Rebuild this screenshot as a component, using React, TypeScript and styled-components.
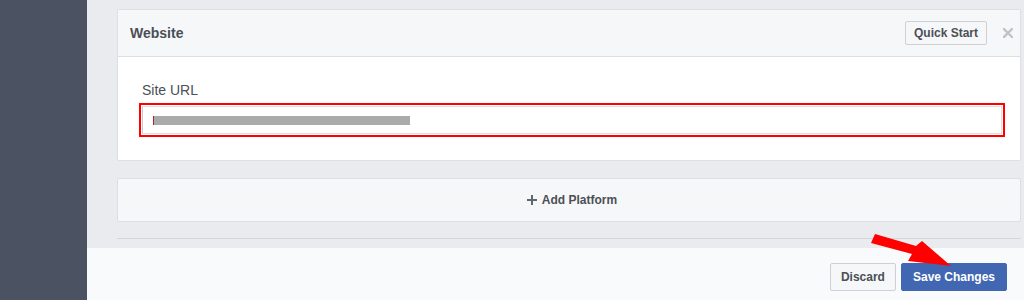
import styled, { createGlobalStyle } from "styled-components";

const GlobalStyle = createGlobalStyle`
  html, body {
    margin: 0;
    padding: 0;
    overflow: hidden;
  }

  body {
    font-family: "Liberation Sans", Arial, sans-serif;
  }
`;

const StyledPage = styled.div`
  position: relative;
  width: 1024px;
  height: 300px;
  display: flex;
  overflow: hidden;
`;

const Sidebar = styled.div`
  width: 87px;
  flex-shrink: 0;
  background-color: #4b5262;
`;

const Main = styled.div`
  flex: 1;
  display: flex;
  flex-direction: column;
  background-color: #e9ebee;
`;

const Content = styled.div`
  flex: 1;
  padding: 9px 3px 0 30px;
  overflow: hidden;
`;

const Card = styled.div`
  background-color: #fff;
  border: 1px solid #dddfe2;
  border-radius: 2px;
`;

const CardHeader = styled.div`
  height: 46px;
  display: flex;
  align-items: center;
  padding: 0 7px 0 12px;
  background-color: #f6f7f9;
  border-bottom: 1px solid #dddfe2;

  h3 {
    flex: 1;
    margin: 0;
    font-size: 14px;
    font-weight: 700;
    color: #4b4f56;
  }
`;

const Button = styled.button<{ $primary?: boolean; $height: number; $pad: number }>`
  height: ${(p) => p.$height}px;
  padding: 0 ${(p) => p.$pad}px;
  font-family: "Liberation Sans", Arial, sans-serif;
  font-size: 12px;
  font-weight: 700;
  border-radius: 2px;
  cursor: pointer;
  color: ${(p) => (p.$primary ? "#fff" : "#4b4f56")};
  background-color: ${(p) => (p.$primary ? "#4267b2" : "#f6f7f9")};
  border: 1px solid ${(p) => (p.$primary ? "#4267b2" : "#ced0d4")};
`;

const CloseIcon = styled.svg`
  width: 10px;
  height: 10px;
  margin-left: 16px;
`;

const CardBody = styled.div`
  padding: 24px 18px 26px 24px;

  label {
    display: block;
    font-size: 14px;
    line-height: 18px;
    color: #4b4f56;
    margin-bottom: 7px;
  }
`;

const UrlField = styled.div`
  height: 28px;
  box-sizing: border-box;
  display: flex;
  align-items: center;
  padding-left: 10px;
  border: 1px solid #dddfe2;
  border-left-color: #c8cbd0;
  outline: 2px solid #ff0000;
  outline-offset: 1px;
  background-color: #fff;
`;

const Redacted = styled.span`
  width: 256px;
  height: 9px;
  background-color: #aaaaaa;
  border-left: 1px solid #b0262c;
`;

const AddPlatform = styled.div`
  margin-top: 17px;
  height: 42px;
  display: flex;
  align-items: center;
  justify-content: center;
  gap: 5px;
  background-color: #f6f7f9;
  border: 1px solid #dddfe2;
  border-radius: 2px;
  font-size: 12px;
  font-weight: 700;
  color: #4b4f56;

  svg {
    width: 10px;
    height: 10px;
    margin-left: 6px;
  }
`;

const Divider = styled.div`
  margin-top: 16px;
  border-top: 1px solid #d3d6db;
`;

const Footer = styled.div`
  height: 52px;
  flex-shrink: 0;
  display: flex;
  justify-content: flex-end;
  align-items: flex-start;
  gap: 5px;
  padding: 15px 17px 0 0;
  box-sizing: border-box;
  background-color: #f9fafb;
`;

const Arrow = styled.svg`
  position: absolute;
  left: 0;
  top: 0;
  pointer-events: none;
`;

const App = () => {
  return (
    <>
      <GlobalStyle />
      <StyledPage>
        <Sidebar />
        <Main>
          <Content>
            <Card>
              <CardHeader>
                <h3>Website</h3>
                <Button $height={24} $pad={8}>
                  Quick Start
                </Button>
                <CloseIcon viewBox="0 0 10 10">
                  <path
                    d="M1 1 L9 9 M9 1 L1 9"
                    stroke="#bec3c9"
                    strokeWidth="2.4"
                    strokeLinecap="square"
                  />
                </CloseIcon>
              </CardHeader>
              <CardBody>
                <label>Site URL</label>
                <UrlField>
                  <Redacted />
                </UrlField>
              </CardBody>
            </Card>
            <AddPlatform>
              <svg viewBox="0 0 10 10">
                <path d="M5 0 V10 M0 5 H10" stroke="#606770" strokeWidth="2" />
              </svg>
              <span>Add Platform</span>
            </AddPlatform>
            <Divider />
          </Content>
          <Footer>
            <Button $height={28} $pad={10}>
              Discard
            </Button>
            <Button $height={28} $pad={11} $primary>
              Save Changes
            </Button>
          </Footer>
        </Main>
        <Arrow width="1024" height="300" viewBox="0 0 1024 300">
          <polygon
            points="875,234 916,246 922,241 951,266 908,261 912,254 871,243"
            fill="#ff0000"
          />
        </Arrow>
      </StyledPage>
    </>
  );
};

export default App;
